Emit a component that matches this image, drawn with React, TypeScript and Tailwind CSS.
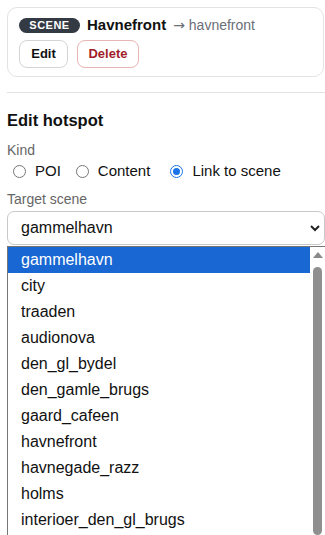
import React from "react";

const scenes = [
  "gammelhavn",
  "city",
  "traaden",
  "audionova",
  "den_gl_bydel",
  "den_gamle_brugs",
  "gaard_cafeen",
  "havnefront",
  "havnegade_razz",
  "holms",
  "interioer_den_gl_brugs",
];

function Radio({ checked }: { checked?: boolean }) {
  return checked ? (
    <span className="w-[13px] h-[13px] rounded-full border-[1.5px] border-[#1a73e8] flex items-center justify-center">
      <span className="w-[7px] h-[7px] rounded-full bg-[#1a73e8]" />
    </span>
  ) : (
    <span className="w-[13px] h-[13px] rounded-full border border-[#767676] bg-white" />
  );
}

export default function App() {
  return (
    <div
      className="w-[325px] h-[535px] overflow-hidden bg-white text-[#1f1f1f]"
      style={{ fontFamily: '"Liberation Sans", Arial, sans-serif' }}
    >
      <div className="ml-[7px] w-[318px] pt-[7px]">
        <div className="w-[317px] border border-[#e3e3e3] rounded-[10px] px-[11px] pt-[9px] pb-[8px]">
          <div className="flex items-center gap-[7px] h-[17px]">
            <span className="bg-[#343a44] text-white text-[11px] font-bold tracking-[0.5px] rounded-full h-[15px] w-[61px] flex items-center justify-center leading-none">
              SCENE
            </span>
            <span className="text-[15px] font-bold text-[#111]">Havnefront</span>
            <span className="text-[14px] text-[#6b6f76]">
              <span className="text-[14px]" style={{ fontFamily: '"DejaVu Sans", sans-serif' }}>
                →
              </span>{" "}
              havnefront
            </span>
          </div>
          <div className="flex gap-[9px] mt-[6px]">
            <button className="h-[28px] w-[49px] border border-[#d4d4d8] rounded-[8px] text-[13px] font-semibold text-[#111] bg-white">
              Edit
            </button>
            <button className="h-[28px] w-[62px] border border-[#e8b5b5] rounded-[8px] text-[13px] font-semibold text-[#a11d2a] bg-white">
              Delete
            </button>
          </div>
        </div>
        <div className="h-px bg-[#e3e3e3] mt-[15px]" />
        <div className="mt-[17px] text-[16.5px] font-bold text-[#111] leading-[20px]">Edit hotspot</div>
        <div className="mt-[12px] text-[14px] text-[#666] leading-[16px]">Kind</div>
        <div className="flex items-center mt-[3px] h-[20px] text-[15px] text-[#111]">
          <label className="flex items-center ml-[6px]">
            <Radio />
            <span className="ml-[9px]">POI</span>
          </label>
          <label className="flex items-center ml-[15px]">
            <Radio />
            <span className="ml-[9px]">Content</span>
          </label>
          <label className="flex items-center ml-[20px]">
            <Radio checked />
            <span className="ml-[9px]">Link to scene</span>
          </label>
        </div>
        <div className="mt-[10px] text-[14px] text-[#666] leading-[16px]">Target scene</div>
        <div className="mt-[4px] h-[34px] w-[318px] border border-[#c8c8c8] rounded-[7px] flex items-center pl-[13px] pr-[2px] text-[16px] text-[#111]">
          <span className="flex-1">gammelhavn</span>
          <svg width="12" height="8" viewBox="0 0 12 8" className="mr-[1px]">
            <path d="M2 2 L6 6 L10 2" fill="none" stroke="#222" strokeWidth="2" />
          </svg>
        </div>
        <div className="mt-[1px] w-[318px] h-[300px] border-l border-t border-[#767676] flex bg-white">
          <div className="flex-1 flex flex-col">
            {scenes.map((s, i) => (
              <div
                key={s}
                className={
                  "h-[26px] shrink-0 flex items-center pl-[13px] text-[16px] " +
                  (i === 0 ? "bg-[#1967d2] text-white" : "text-[#111]")
                }
              >
                {s}
              </div>
            ))}
          </div>
          <div className="w-[15px] flex flex-col items-center pt-[4px]">
            <svg width="10" height="8" viewBox="0 0 10 8">
              <path d="M0 7 L5 1 L10 7 Z" fill="#8a8a8a" />
            </svg>
            <div className="mt-[8px] w-[9px] h-[268px] rounded-full bg-[#8f8f8f]" />
          </div>
        </div>
      </div>
    </div>
  );
}
